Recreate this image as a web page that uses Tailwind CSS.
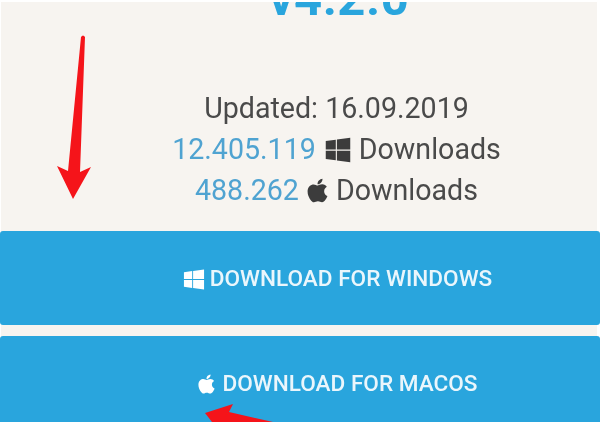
<!DOCTYPE html>
<html lang="en">
<head>
    <meta charset="UTF-8">
    <title>Download</title>
    <script src="https://cdn.jsdelivr.net/npm/@tailwindcss/browser@4"></script>
</head>
<body class="w-[600px] h-[422px] overflow-hidden bg-white font-['Roboto',sans-serif]">

<div class="relative h-[422px] overflow-hidden mt-[2px] ml-[1px] mr-[3px] bg-[#f7f4f0]">
    <div class="pl-[75px] text-center">
        <div class="h-[76px] -mt-[41px] pl-[5px] text-[49px] leading-[76px] font-bold text-[#29a5dd] tracking-[0.5px] blur-[0.4px]">v4.2.0</div>
        <div class="mt-[51px] text-[28.6px] leading-[41px] text-[#4a4a4a] blur-[0.4px]">
            <div>Updated: 16.09.2019</div>
            <div class="flex items-center justify-center">
                <span class="text-[#4fa3d1]">12.405.119</span>
                <svg class="w-[28px] h-[28px] ml-[8px] mr-[7px]" viewBox="0 0 448 512" fill="#3c3c3c"><path d="M0 93.7l183.6-25.3v177.4H0V93.7zm0 324.6l183.6 25.3V268.4H0v149.9zm203.8 28L448 480V268.4H203.8v177.9zm0-380.6v180.1H448V32L203.8 65.7z"/></svg>
                <span>Downloads</span>
            </div>
            <div class="flex items-center justify-center">
                <span class="text-[#4fa3d1]">488.262</span>
                <svg class="w-[23px] h-[27px] mx-[7px]" viewBox="0 0 384 512" fill="#3c3c3c"><path d="M318.7 268.7c-.2-36.7 16.4-64.4 50-84.8-18.8-26.9-47.2-41.7-84.7-44.6-35.5-2.8-74.3 20.7-88.5 20.7-15 0-49.4-19.7-76.4-19.7C63.3 141.2 4 184.8 4 273.5q0 39.3 14.4 81.2c12.8 36.7 59 126.7 107.2 125.2 25.2-.6 43-17.9 75.8-17.9 31.8 0 48.3 17.9 76.4 17.9 48.6-.7 90.4-82.5 102.6-119.3-65.2-30.7-61.7-90-61.7-91.9zm-56.6-164.2c27.3-32.4 24.8-61.9 24-72.5-24.1 1.4-52 16.4-67.9 34.9-17.5 19.8-27.8 44.3-25.6 71.9 26.1 2 49.9-11.4 69.5-34.3z"/></svg>
                <span>Downloads</span>
            </div>
        </div>
    </div>
</div>

<div class="absolute left-0 top-[231px] w-[600px] flex flex-col gap-[11px]">
    <a class="h-[94px] rounded-[3px] bg-[#29a5dd] pl-[75px] pt-[2px] flex items-center justify-center text-white/90 text-[22.6px] font-medium">
        <svg class="w-[22px] h-[23px] mr-[5px] blur-[0.4px]" viewBox="0 0 448 512" fill="#ffffff"><path d="M0 93.7l183.6-25.3v177.4H0V93.7zm0 324.6l183.6 25.3V268.4H0v149.9zm203.8 28L448 480V268.4H203.8v177.9zm0-380.6v180.1H448V32L203.8 65.7z"/></svg>
        <span class="blur-[0.4px]">DOWNLOAD FOR WINDOWS</span>
    </a>
    <a class="h-[94px] rounded-[3px] bg-[#29a5dd] pl-[75px] pt-[2px] flex items-center justify-center text-white/90 text-[22.6px] font-medium">
        <svg class="w-[19px] h-[22px] mr-[6px] blur-[0.4px]" viewBox="0 0 384 512" fill="#ffffff"><path d="M318.7 268.7c-.2-36.7 16.4-64.4 50-84.8-18.8-26.9-47.2-41.7-84.7-44.6-35.5-2.8-74.3 20.7-88.5 20.7-15 0-49.4-19.7-76.4-19.7C63.3 141.2 4 184.8 4 273.5q0 39.3 14.4 81.2c12.8 36.7 59 126.7 107.2 125.2 25.2-.6 43-17.9 75.8-17.9 31.8 0 48.3 17.9 76.4 17.9 48.6-.7 90.4-82.5 102.6-119.3-65.2-30.7-61.7-90-61.7-91.9zm-56.6-164.2c27.3-32.4 24.8-61.9 24-72.5-24.1 1.4-52 16.4-67.9 34.9-17.5 19.8-27.8 44.3-25.6 71.9 26.1 2 49.9-11.4 69.5-34.3z"/></svg>
        <span class="blur-[0.4px]">DOWNLOAD FOR MACOS</span>
    </a>
</div>

<!-- red annotation arrows drawn on the screenshot -->
<svg class="absolute left-0 top-0 w-[600px] h-[422px] pointer-events-none" viewBox="0 0 600 422">
    <path d="M81 37 Q83 34 85 37 L80 172 L91 167 L73 199 L57 166 L68 171 Z" fill="#f5141a"/>
    <path d="M205 413 L233 404 L229 412 L273 422 L212 422 Z" fill="#f5141a"/>
</svg>

</body>
</html>
